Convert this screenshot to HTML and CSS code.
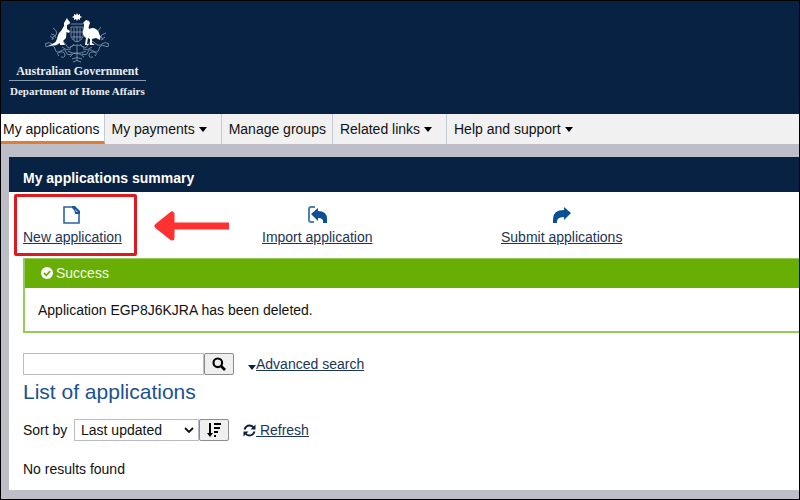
FILE: index.html
```html
<!DOCTYPE html>
<html lang="en">
<head>
<meta charset="utf-8">
<meta name="viewport" content="width=device-width, initial-scale=1">
<title>My applications summary</title>
<link rel="stylesheet" href="styles.css">
</head>
<body>
<header class="banner">
  <div class="brand">
    <svg class="crest" viewBox="0 0 66 50" width="66" height="50" aria-hidden="true">
      <g fill="none" stroke="#7f93ae" stroke-width="0.9">
        <path d="M1 31q4-3 7 0t7-1 7 2 8-1M65 31q-4-3-7 0t-7-1-7 2-8-1"/>
        <path d="M2 31q-2 4 3 2q5-2 6 3q1 5 6 2q4-3 5 1q1 4 6 2M64 31q2 4-3 2q-5-2-6 3q-1 5-6 2q-4-3-5 1q-1 4-6 2"/>
        <path d="M9 15q5 3 3 7q-4 1-4 5M7 21q4 0 5 4M10 26l-4-3M57 14q-4 3-3 8q4 1 5 5M62 20q-5 1-6 5M61 24l-4 3"/>
        <path d="M15 43q-3-3 1-4q5-1 5 4q-1 2-4 1M51 43q3-3-1-4q-5-1-5 4q1 2 4 1M24 38q8 5 18 0M26 44q3-5 7-4t7 4M33 32v16M28 46q5-3 10 0M29 49q4-3 8 0M18 34q4 4 9 2M48 34q-4 4-9 2M26 34q7-4 14 0"/>
        <path d="M27 14h12v10q-2 4-6 5q-4-1-6-5zM27 19h12M33 14v15M30 15v12M36 15v12M28 24h10M27 11h12"/>
      </g>
      <path class="crest-solid" d="M33 0l1 2 2-1v2l2 1-2 1v2l-2-1-1 2-1-2-2 1V5l-2-1 2-1V1l2 1z"/>
      <path class="crest-solid" d="M23 5l1 2 2 2-.5 2-2.500 1v4l3 2-1 2-2.500-1-.5 6-3 3 2 4h-5l0-2-4 2-8 1 6-3q2-1 3-4q1-6 4-8l3-5 0-3z"/>
      <path class="crest-solid" d="M40 9l2-2 3 1 1 2q-2 4-1 6l3-1q5 0 7 5q2 4 1 7l-4-2-4 1v4l3 2h-5v-6l-2-1-1 6 3 1h-5l1-7q-4-3-3-7q1-3 1-7l-1-1z"/>
    </svg>
    <div class="brand-gov">Australian Government</div>
    <div class="brand-dept">Department of Home Affairs</div>
  </div>
</header>
<nav class="tabs" aria-label="Main">
  <a class="tab tab-current" href="#" aria-current="page">My applications</a>
  <a class="tab tab-menu" href="#">My payments <span class="caret"></span></a>
  <a class="tab" href="#">Manage groups</a>
  <a class="tab tab-menu" href="#">Related links <span class="caret"></span></a>
  <a class="tab tab-menu tab-last" href="#">Help and support <span class="caret"></span></a>
</nav>
<main class="panel">
  <h1 class="panel-title">My applications summary</h1>
  <div class="panel-body">
    <div class="actions">
      <div class="action-cell">
        <a class="action" href="#">
          <svg viewBox="0 0 20 20" width="20" height="20" aria-hidden="true"><path d="M2 2h10l5 5v11H2z" fill="#fff" stroke="#2b62a3" stroke-width="1.6"/><path d="M10 1h3l5 5v3h-5q0-4-3-6z" fill="#1b5599"/><path d="M13 4l3 3h-2z" fill="#a9c6e4"/></svg>
          New application
        </a>
        <span class="highlight"></span>
        <svg class="pointer" viewBox="0 0 75 30" width="75" height="30" aria-hidden="true"><path d="M3 15L18 3v24z" fill="#ff3131" stroke="#ff3131" stroke-width="5" stroke-linejoin="round"/><path d="M16 11.500h59v7H16z" fill="#ff3131"/></svg>
      </div>
      <div class="action-cell">
        <a class="action" href="#">
          <svg viewBox="0 0 20 20" width="20" height="20" aria-hidden="true"><path d="M8 2H4Q2 2 2 4v11q0 2 2 2h3" fill="none" stroke="#4d7fb8" stroke-width="2"/><path d="M4 9l7-6v3q9 0 9 8v4h-4q1-5-5-5v3z" fill="#0b4f94"/></svg>
          Import application
        </a>
      </div>
      <div class="action-cell">
        <a class="action" href="#">
          <svg viewBox="0 0 20 20" width="20" height="20" aria-hidden="true"><path d="M19 8l-7-6v3Q1 5 1 14v4h4q-1-6 7-6v3z" fill="#0b4f94"/></svg>
          Submit applications
        </a>
      </div>
    </div>
    <section class="alert" role="status">
      <h2 class="alert-title">
        <svg viewBox="0 0 12 12" width="12" height="12" aria-hidden="true"><circle cx="6" cy="6" r="6" fill="#fff"/><path d="M3 6l2.300 2.300L9.200 4.200" fill="none" stroke="#69ae05" stroke-width="1.800"/></svg>
        Success
      </h2>
      <p class="alert-text">Application EGP8J6KJRA has been deleted.</p>
    </section>
    <form class="row search">
      <input class="field" type="text" aria-label="Search applications">
      <button class="icon-button" type="button" aria-label="Search">
        <svg viewBox="0 0 14 14" width="14" height="14" aria-hidden="true"><circle cx="5.800" cy="5.800" r="4.300" fill="none" stroke="#000" stroke-width="2.200"/><path d="M9 9l4 4" stroke="#000" stroke-width="2.600"/></svg>
      </button>
      <span class="side-link"><span class="caret caret-navy"></span><a class="link" href="#">Advanced search</a></span>
    </form>
    <h2 class="list-title">List of applications</h2>
    <form class="row sort">
      <label class="sort-label" for="sort">Sort by</label>
      <span class="select-wrap">
        <select class="select" id="sort"><option>Last updated</option></select>
        <svg class="chevron" viewBox="0 0 10 6" width="10" height="6" aria-hidden="true"><path d="M1 1l4 4 4-4" fill="none" stroke="#111" stroke-width="1.800"/></svg>
      </span>
      <button class="icon-button" type="button" aria-label="Sort descending">
        <svg viewBox="0 0 16 16" width="16" height="16" aria-hidden="true"><path d="M4 1v12" stroke="#000" stroke-width="2"/><path d="M1 11h6l-3 4zM8 1h7v2H8zM8 5h6v2H8zM8 9h4v2H8zM8 13h2v2H8z"/></svg>
      </button>
      <a class="link side-link" href="#"><svg class="refresh" viewBox="0 0 13 13" width="13" height="13" aria-hidden="true"><path d="M1.500 5.500Q3 1.500 6.500 1.500q2.500 0 4 2M11.500 7.500Q10 11.500 6.500 11.500q-2.500 0-4-2" fill="none" stroke="#0b2341" stroke-width="2"/><path d="M12.500.5v5h-5zM.5 12.500v-5h5z" fill="#0b2341"/></svg>&nbsp;Refresh</a>
    </form>
    <p class="empty">No results found</p>
  </div>
</main>
</body>
</html>
```

FILE: styles.css
```css
* {
  box-sizing: border-box;
}

body {
  display: flex;
  flex-direction: column;
  min-height: 100vh;
  margin: 0;
  border: 1px solid #000;
  background: #bdbec8;
  color: #111;
  font: 14px/16px "Liberation Sans", Arial, sans-serif;
}

h1, h2, p {
  margin: 0;
}

a {
  color: inherit;
}

.banner {
  padding: 12px 8px 15px;
  background: #072242;
}

.brand {
  display: flex;
  flex-direction: column;
  align-items: center;
  width: fit-content;
  color: #e9edf2;
  font: bold 12px/16px "Liberation Serif", "Times New Roman", serif;
}

.crest {
  display: block;
}

.crest-solid {
  fill: #fff;
}

.brand-gov {
  padding-bottom: 1px;
}

.brand-dept {
  padding: 2px 1px 0;
  border-top: 1px solid #8b9bb0;
  font-size: 11px;
}

.tabs {
  display: flex;
  margin-bottom: 13px;
  background: #f1f1f1;
}

.tab {
  padding: 7px 6px 7px 7px;
  border-right: 1px solid #c4cad6;
  text-decoration: none;
  white-space: nowrap;
}

.tab-current {
  padding: 7px 4px 4px 2px;
  border-bottom: 3px solid #df7d32;
  background: #fff;
}

.tab-menu {
  padding-right: 14px;
}

.tab-last {
  border-right: 0;
}

.caret {
  display: inline-block;
  border: 4px solid transparent;
  border-top: 5px solid #000;
  border-bottom: 0;
  vertical-align: 2px;
}

.caret-navy {
  border-top-color: #0b2341;
  vertical-align: -1px;
}

.panel {
  flex: 1;
  margin: 0 0 9px 8px;
  background: #fff;
}

.panel-title {
  padding: 13px 14px 6px;
  background: #072242;
  color: #fff;
  font-size: 14px;
  line-height: 16px;
}

.panel-body {
  padding-left: 14px;
}

.actions {
  display: grid;
  grid-template-columns: repeat(auto-fill, 239px);
  padding: 13px 0 13px;
}

.action-cell {
  position: relative;
}

.action {
  display: inline-flex;
  flex-direction: column;
  align-items: center;
  gap: 4px;
  color: #1a3556;
}

.highlight {
  position: absolute;
  top: -11px;
  left: -9px;
  width: 123px;
  height: 62px;
  border: 3px solid #dd1a21;
  border-radius: 2px;
  pointer-events: none;
}

.pointer {
  position: absolute;
  top: 6px;
  left: 131px;
}

.alert {
  border: 2px solid #94cc5c;
  border-width: 1px 0 2px 2px;
}

.alert-title {
  display: flex;
  align-items: center;
  gap: 3px;
  padding: 6px 16px 7px;
  background: #69ae05;
  color: #f4fbe9;
  font-size: 14px;
  font-weight: normal;
  line-height: 16px;
}

.alert-text {
  padding: 14px 13px 13px;
}

.row {
  display: flex;
  align-items: center;
}

.search {
  padding-top: 20px;
}

.field {
  width: 181px;
  height: 22px;
  padding: 0 4px;
  border: 1px solid #b9bcc4;
  font: inherit;
}

.icon-button {
  display: flex;
  align-items: center;
  justify-content: center;
  width: 30px;
  height: 22px;
  padding: 0;
  border: 1px solid #8c8c8c;
  border-radius: 2px;
  background: #efefef;
}

.side-link {
  margin-left: 14px;
}

.link {
  color: #1a3556;
}

.list-title {
  padding: 5px 0 15px;
  color: #1b5191;
  font-size: 21px;
  font-weight: normal;
  line-height: 24px;
}

.sort-label {
  width: 51px;
}

.select-wrap {
  position: relative;
}

.select {
  display: block;
  width: 125px;
  height: 22px;
  padding: 0 20px 0 6px;
  border: 1px solid #b9bcc4;
  border-radius: 0;
  appearance: none;
  background: #fff;
  color: #111;
  font: inherit;
}

.chevron {
  position: absolute;
  top: 8px;
  right: 5px;
  pointer-events: none;
}

.refresh {
  vertical-align: -2px;
}

.empty {
  padding: 20px 0 12px;
}
```
